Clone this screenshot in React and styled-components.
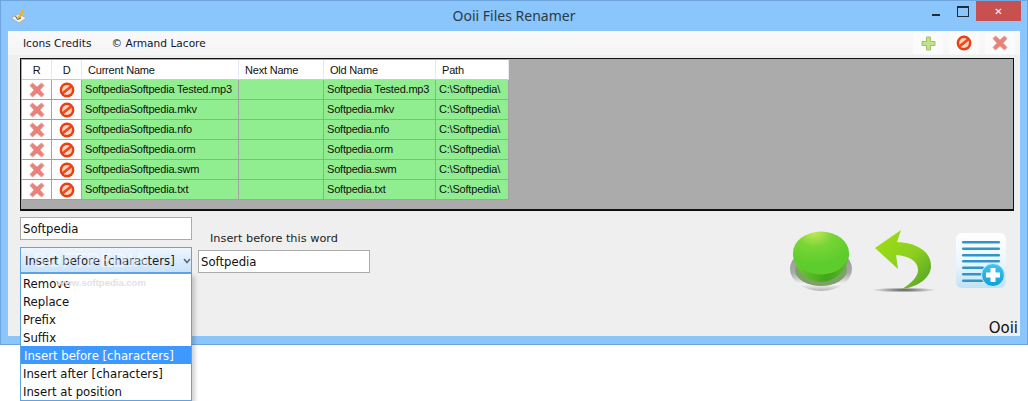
import styled, { createGlobalStyle } from "styled-components";

const GlobalStyle = createGlobalStyle`
  html, body {
    margin: 0;
    padding: 0;
    background: #ffffff;
  }
  * {
    box-sizing: border-box;
  }
`;

const files = [
  { current: "SoftpediaSoftpedia Tested.mp3", old: "Softpedia Tested.mp3" },
  { current: "SoftpediaSoftpedia.mkv", old: "Softpedia.mkv" },
  { current: "SoftpediaSoftpedia.nfo", old: "Softpedia.nfo" },
  { current: "SoftpediaSoftpedia.orm", old: "Softpedia.orm" },
  { current: "SoftpediaSoftpedia.swm", old: "Softpedia.swm" },
  { current: "SoftpediaSoftpedia.txt", old: "Softpedia.txt" },
];

const options = [
  "Remove",
  "Replace",
  "Prefix",
  "Suffix",
  "Insert before [characters]",
  "Insert after [characters]",
  "Insert at position",
];

const columns = { r: 30, d: 30, current: 157, next: 85, old: 112, path: 73 };

function CrossIcon() {
  return (
    <svg width="16" height="16" viewBox="0 0 16 16">
      <path
        d="M3.5 1 8 5 12.5 1 15 3.5 11 8 15 12.5 12.5 15 8 11 3.5 15 1 12.5 5 8 1 3.5Z"
        fill="#ea8078"
        stroke="#e3a8a2"
        strokeWidth="1"
        strokeLinejoin="round"
      />
    </svg>
  );
}

function BanIcon() {
  return (
    <svg width="16" height="16" viewBox="0 0 16 16">
      <circle cx="8" cy="8" r="7.4" fill="#ea3f12" />
      <circle cx="8" cy="8" r="4.9" fill="#fbd2bb" />
      <path d="M3.8 11.4 12.2 4.6" stroke="#ee4a1a" strokeWidth="3" />
      <path d="M5 12.4 12.8 6.4" stroke="#fff1e8" strokeWidth=".8" />
    </svg>
  );
}

function PlusIcon() {
  return (
    <svg width="15" height="15" viewBox="0 0 15 15">
      <path
        d="M5.5 1h4v4.5H14v4H9.5V14h-4V9.5H1v-4h4.5Z"
        fill="#c4e08c"
        stroke="#9cc45e"
        strokeWidth="1"
      />
    </svg>
  );
}

function AppLogo() {
  return (
    <svg width="18" height="16" viewBox="0 0 18 16">
      <path d="M1 10 8.5 6l8 4-7.5 5Z" fill="#efefef" stroke="#a5a5a5" strokeWidth=".8" />
      <path d="M7 10 12.5 1.5l2.2 1.3L9.5 11.5Z" fill="#efb62c" />
      <path d="M5.5 8 7.5 11.5 11 10" fill="none" stroke="#4f5d64" strokeWidth="1" />
    </svg>
  );
}

function GoButton() {
  return (
    <svg width="62" height="60" viewBox="0 0 62 60">
      <defs>
        <linearGradient id="ring" x1="0" y1="0" x2="0" y2="1">
          <stop offset="0" stopColor="#8a928c" />
          <stop offset=".6" stopColor="#a8acaa" />
          <stop offset=".85" stopColor="#f4f4f4" />
          <stop offset="1" stopColor="#b5b5b5" />
        </linearGradient>
        <linearGradient id="side" x1="0" y1="0" x2="1" y2="0">
          <stop offset="0" stopColor="#74cc38" />
          <stop offset=".6" stopColor="#42a41a" />
          <stop offset="1" stopColor="#5cba2a" />
        </linearGradient>
        <radialGradient id="top" cx=".38" cy=".02" r=".75">
          <stop offset="0" stopColor="#c6e658" />
          <stop offset=".45" stopColor="#78d536" />
          <stop offset="1" stopColor="#5ccd2c" />
        </radialGradient>
      </defs>
      <ellipse cx="31" cy="38" rx="31" ry="22" fill="url(#ring)" />
      <ellipse cx="31" cy="39" rx="26" ry="16" fill="#7da266" />
      <path d="M3 22C3 34 14 51 31 51S59 34 59 22Z" fill="url(#side)" />
      <ellipse cx="31" cy="22" rx="28" ry="21.5" fill="url(#top)" />
    </svg>
  );
}

function BackArrow() {
  return (
    <svg width="64" height="64" viewBox="0 0 64 64">
      <defs>
        <linearGradient id="arrow" x1="0" y1="0" x2="1" y2="1">
          <stop offset="0" stopColor="#9ee011" />
          <stop offset=".55" stopColor="#8ccf20" />
          <stop offset="1" stopColor="#4e9c2a" />
        </linearGradient>
        <radialGradient id="shadow" cx=".5" cy=".5" r=".5">
          <stop offset="0" stopColor="#555" />
          <stop offset="1" stopColor="#555" stopOpacity="0" />
        </radialGradient>
      </defs>
      <ellipse cx="32" cy="61" rx="32" ry="2.5" fill="url(#shadow)" />
      <path
        d="M29 1 25 13C46 14 59 23 59 37 59 48 47 58 30 60 41 53 46 47 46 41 46 32 37 27 24 26L26 40 3 19Z"
        fill="url(#arrow)"
      />
    </svg>
  );
}

function ListAddIcon() {
  return (
    <svg width="50" height="56" viewBox="0 0 50 56">
      <defs>
        <linearGradient id="sheet" x1="0" y1="0" x2="0" y2="1">
          <stop offset="0" stopColor="#ffffff" />
          <stop offset=".55" stopColor="#eaf6fd" />
          <stop offset="1" stopColor="#bfe2f6" />
        </linearGradient>
        <linearGradient id="badge" x1="0" y1="0" x2="0" y2="1">
          <stop offset="0" stopColor="#43c5f0" />
          <stop offset="1" stopColor="#0d9ed8" />
        </linearGradient>
      </defs>
      <rect x="0" y="0" width="50" height="55" rx="6" fill="url(#sheet)" />
      {[9, 15.5, 22, 28, 34.5, 41, 47.5].map((y, i) => (
        <rect key={y} x="6" y={y - 1} width={i < 4 ? 38 : 22} height="2.6" rx="1.3" fill="#3096c9" />
      ))}
      <circle cx="37" cy="42" r="11.5" fill="url(#badge)" stroke="#d8eef9" strokeWidth="1" />
      <path d="M34.5 35h5v4.5H44v5h-4.5V49h-5v-4.5H30v-5h4.5Z" fill="#fff" />
    </svg>
  );
}

function Chevron() {
  return (
    <svg width="8" height="6" viewBox="0 0 8 6">
      <path d="M1 1 4 4.5 7 1" fill="none" stroke="#5a6670" strokeWidth="1.5" />
    </svg>
  );
}

export default function App() {
  return (
    <>
      <GlobalStyle />
      <Page>
        <Window>
          <TitleBar>
            <LogoSlot>
              <AppLogo />
            </LogoSlot>
            <Title>Ooii Files Renamer</Title>
            <WindowButtons>
              <WindowButton>
                <MinimizeGlyph />
              </WindowButton>
              <WindowButton>
                <MaximizeGlyph />
              </WindowButton>
              <CloseButton>✕</CloseButton>
            </WindowButtons>
          </TitleBar>
          <Client>
            <MenuBar>
              <MenuItem>Icons Credits</MenuItem>
              <MenuItem>© Armand Lacore</MenuItem>
              <MenuSpacer />
              <ToolButton>
                <PlusIcon />
              </ToolButton>
              <ToolButton>
                <BanIcon />
              </ToolButton>
              <ToolButton>
                <CrossIcon />
              </ToolButton>
            </MenuBar>
            <Grid>
              <Row>
                <HeaderCell $w={columns.r} $center>R</HeaderCell>
                <HeaderCell $w={columns.d} $center>D</HeaderCell>
                <HeaderCell $w={columns.current}>Current Name</HeaderCell>
                <HeaderCell $w={columns.next}>Next Name</HeaderCell>
                <HeaderCell $w={columns.old}>Old Name</HeaderCell>
                <HeaderCell $w={columns.path}>Path</HeaderCell>
              </Row>
              {files.map((file) => (
                <Row key={file.current}>
                  <IconCell $w={columns.r}>
                    <CrossIcon />
                  </IconCell>
                  <IconCell $w={columns.d}>
                    <BanIcon />
                  </IconCell>
                  <Cell $w={columns.current}>{file.current}</Cell>
                  <Cell $w={columns.next} />
                  <Cell $w={columns.old}>{file.old}</Cell>
                  <Cell $w={columns.path}>C:\Softpedia\</Cell>
                </Row>
              ))}
            </Grid>
            <Controls>
              <LeftColumn>
                <TextBox>Softpedia</TextBox>
                <ComboBox>
                  <span>Insert before [characters]</span>
                  <Chevron />
                  <Watermark>SOFTPEDIA</Watermark>
                </ComboBox>
                <DropList>
                  {options.map((option) => (
                    <DropItem key={option} $selected={option === "Insert before [characters]"}>
                      {option}
                    </DropItem>
                  ))}
                  <SmallWatermark>www.softpedia.com</SmallWatermark>
                </DropList>
              </LeftColumn>
              <MiddleColumn>
                <FieldLabel>Insert before this word</FieldLabel>
                <TextBox>Softpedia</TextBox>
              </MiddleColumn>
              <RightColumn>
                <BigIcons>
                  <GoButton />
                  <BackArrow />
                  <ListAddIcon />
                </BigIcons>
                <Brand>Ooii</Brand>
              </RightColumn>
            </Controls>
          </Client>
        </Window>
      </Page>
    </>
  );
}

const Page = styled.div`
  width: 1028px;
  height: 401px;
  overflow: hidden;
`;

const Window = styled.div`
  width: 1028px;
  height: 345px;
  display: flex;
  flex-direction: column;
  background: #8ac5fb;
  border: 1px solid #6fa5dc;
  padding: 0 7px 8px;
`;

const TitleBar = styled.div`
  height: 30px;
  flex: none;
  display: flex;
  align-items: center;
  justify-content: space-between;
  position: relative;
`;

const LogoSlot = styled.div`
  display: flex;
  margin: 0 0 0 2px;
`;

/* centred on the whole bar, over the logo and the window buttons */
const Title = styled.div`
  position: absolute;
  left: 0;
  right: 0;
  top: 6px;
  text-align: center;
  font-family: "Noto Sans", sans-serif;
  font-size: 14px;
  line-height: 18px;
  color: #2c3a48;
`;

const WindowButtons = styled.div`
  display: flex;
  align-self: flex-start;
  margin-right: -1px;
`;

const WindowButton = styled.div`
  width: 27px;
  height: 20px;
  display: flex;
  align-items: center;
  justify-content: center;
`;

const MinimizeGlyph = styled.div`
  width: 8px;
  height: 2px;
  background: #1f2c38;
  margin-top: 7px;
`;

const MaximizeGlyph = styled.div`
  width: 10px;
  height: 8px;
  border: 1px solid #1f2c38;
  border-top-width: 2px;
  box-sizing: content-box;
`;

const CloseButton = styled.div`
  width: 45px;
  height: 20px;
  background: #c75050;
  color: #ffffff;
  display: flex;
  align-items: center;
  justify-content: center;
  font-family: "DejaVu Sans", sans-serif;
  font-size: 10px;
  font-weight: bold;
`;

const Client = styled.div`
  flex: 1;
  min-height: 0;
  background: #efefef;
  display: flex;
  flex-direction: column;
  padding: 0 6px 0 12px;
`;

const MenuBar = styled.div`
  height: 24px;
  flex: none;
  margin: 0 -6px 0 -12px;
  padding: 0 5px 0 7px;
  display: flex;
  align-items: center;
  background: linear-gradient(#f9f9f9, #f5f5f5);
`;

const MenuItem = styled.div`
  font-family: "DejaVu Sans", sans-serif;
  font-size: 10.6px;
  color: #14142e;
  padding: 0 8px;
  margin-right: 4px;
`;

const MenuSpacer = styled.div`
  flex: 1;
`;

const ToolButton = styled.div`
  width: 30px;
  height: 22px;
  margin-left: 6px;
  background: #fbfbfb;
  display: flex;
  align-items: center;
  justify-content: center;
`;

const Grid = styled.div`
  height: 153px;
  flex: none;
  margin-top: 3px;
  background: #ababab;
  border: 1px solid #101010;
  border-width: 1px 1px 2px 1px;
  padding: 1px 0 0 1px;
  display: flex;
  flex-direction: column;
`;

const Row = styled.div`
  display: flex;
  height: 20px;
  flex: none;
`;

const HeaderCell = styled.div`
  width: ${(p) => p.$w}px;
  height: 20px;
  background: #ffffff;
  border-right: 1px solid #e4e8f2;
  border-bottom: 1px solid #c5c9dc;
  font-family: "Liberation Sans", sans-serif;
  font-size: 11px;
  letter-spacing: -0.2px;
  color: #111;
  display: flex;
  align-items: center;
  justify-content: ${(p) => (p.$center ? "center" : "flex-start")};
  padding-left: ${(p) => (p.$center ? 0 : 6)}px;
`;

const Cell = styled.div`
  width: ${(p) => p.$w}px;
  height: 20px;
  background: #90ee90;
  border-right: 1px solid #a4a0a4;
  border-bottom: 1px solid #a4a0a4;
  font-family: "Liberation Sans", sans-serif;
  font-size: 11px;
  letter-spacing: -0.2px;
  color: #111;
  line-height: 19px;
  padding-left: 3px;
  white-space: nowrap;
  overflow: hidden;
`;

const IconCell = styled.div`
  width: ${(p) => p.$w}px;
  height: 20px;
  background: #ffffff;
  border-right: 1px solid #a4a0a4;
  border-bottom: 1px solid #a4a0a4;
  display: flex;
  align-items: center;
  justify-content: center;
`;

const Controls = styled.div`
  flex: 1;
  min-height: 0;
  display: flex;
  align-items: stretch;
  padding-top: 6px;
`;

const LeftColumn = styled.div`
  width: 172px;
  flex: none;
  display: flex;
  flex-direction: column;
  gap: 7px;
  position: relative;
`;

const TextBox = styled.div`
  width: 172px;
  height: 23px;
  background: #ffffff;
  border: 1px solid #ababab;
  font-family: "DejaVu Sans", sans-serif;
  font-size: 11.7px;
  color: #111;
  line-height: 21px;
  padding: 1px 0 0 2px;
`;

const ComboBox = styled.div`
  width: 172px;
  height: 26px;
  border: 1px solid #5ea4e4;
  background: linear-gradient(#eef6fe, #c9e2fa);
  display: flex;
  align-items: center;
  justify-content: space-between;
  padding: 2px 0 0 4px;
  font-family: "DejaVu Sans", sans-serif;
  font-size: 11.7px;
  color: #1c1c1c;
  position: relative;
  white-space: nowrap;
`;

const Watermark = styled.div`
  position: absolute;
  left: 12px;
  top: 1px;
  font-family: "Liberation Sans", sans-serif;
  font-size: 20px;
  font-weight: bold;
  line-height: 23px;
  color: rgba(255, 255, 255, 0.45);
`;

const DropList = styled.div`
  position: absolute;
  top: 56px;
  left: 0;
  width: 172px;
  height: 128px;
  background: #ffffff;
  border: 1px solid #5ea4e4;
  box-shadow: 3px 3px 4px rgba(0, 0, 0, 0.18);
`;

const DropItem = styled.div`
  height: 18px;
  line-height: 20px;
  padding-left: ${(p) => (p.$selected ? 3 : 2)}px;
  font-family: "DejaVu Sans", sans-serif;
  font-size: 11.7px;
  color: ${(p) => (p.$selected ? "#ffffff" : "#111")};
  background: ${(p) => (p.$selected ? "#3d99ff" : "transparent")};
  white-space: nowrap;
`;

const SmallWatermark = styled.div`
  position: absolute;
  left: 36px;
  top: 3px;
  font-family: "Liberation Sans", sans-serif;
  font-size: 9.5px;
  font-weight: bold;
  color: #e2e2e2;
`;

const MiddleColumn = styled.div`
  width: 172px;
  flex: none;
  margin-left: 6px;
  padding-top: 15px;
  display: flex;
  flex-direction: column;
  gap: 4px;
`;

const FieldLabel = styled.div`
  font-family: "DejaVu Sans", sans-serif;
  font-size: 11.3px;
  color: #222;
  padding-left: 12px;
  line-height: 14px;
`;

const RightColumn = styled.div`
  flex: 1;
  display: flex;
  flex-direction: column;
  align-items: flex-end;
  justify-content: space-between;
  margin-right: -5px;
`;

const BigIcons = styled.div`
  display: flex;
  align-items: center;
  gap: 20px;
  margin: 12px 13px 0 0;
`;

const Brand = styled.div`
  font-family: "DejaVu Sans", sans-serif;
  font-size: 15px;
  line-height: 15px;
  color: #111;
  padding-right: 1px;
`;
